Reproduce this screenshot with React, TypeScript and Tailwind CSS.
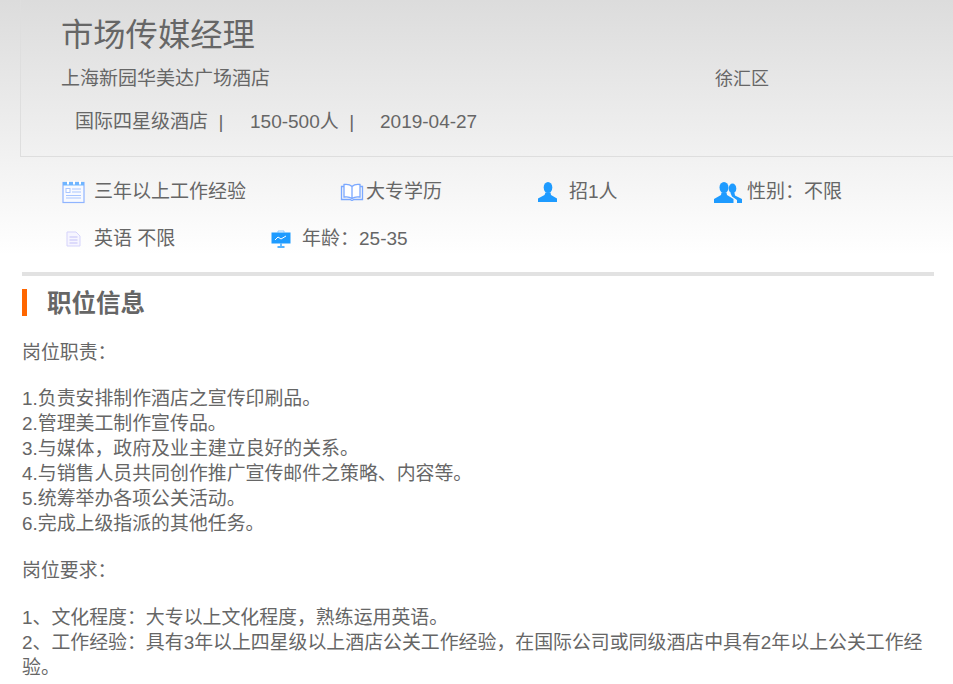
const font = "font-['Liberation_Sans','Noto_Sans_CJK_SC',sans-serif]"

const CalendarIcon = () => (
  <svg width="24" height="24" viewBox="0 0 24 24" fill="none">
    <rect x="1" y="2.500" width="21" height="20" fill="#f8faff" stroke="#8fb4ff" strokeWidth="1.200" />
    <rect x="1" y="2" width="21" height="3.500" fill="#6fb5ff" />
    <rect x="5" y="1" width="2" height="3.500" fill="#fff" />
    <rect x="11" y="1" width="2" height="3.500" fill="#fff" />
    <rect x="17" y="1" width="2" height="3.500" fill="#fff" />
    <rect x="4" y="8.500" width="4" height="4" fill="#fff" stroke="#a9c6ff" />
    <path d="M10 9h9M10 12h9M4 15.500h15M4 18h15" stroke="#a9c6ff" />
  </svg>
)

const BookIcon = () => (
  <svg width="24" height="18" viewBox="0 0 24 18" fill="none" stroke="#7aa8ff" strokeWidth="1.300">
    <path d="M12 3.500C10 1.500 7 1 4 1.500V14c3-.5 6 0 8 1.500 2-1.500 5-2 8-1.500V1.500C17 1 14 1.500 12 3.500zM12 3.500v12" fill="#fff" />
    <path d="M4 3.500H1.500V16.500H10L12 17.500 14 16.500H22.500V3.500H20" />
  </svg>
)

const UserIcon = () => (
  <svg width="20" height="20" viewBox="0 0 20 20" fill="#1e9bff">
    <ellipse cx="10" cy="5.500" rx="4.300" ry="5.500" />
    <path d="M7.500 10.500h5l.5 2.500 6 3.500V20H0v-3.500L6.500 13z" />
  </svg>
)

const UsersIcon = () => (
  <svg width="28" height="21" viewBox="0 0 28 21" fill="#1e9bff">
    <ellipse cx="18.500" cy="6.500" rx="3.800" ry="5" />
    <path d="M16.500 11h4l.5 2.500 7 3.500v4h-5v-3l-5-3.500z" />
    <ellipse cx="10" cy="5.500" rx="4.500" ry="5.500" />
    <path d="M7.500 10.500h5l.5 2.500 6.500 4v4H0v-4L7 13z" />
  </svg>
)

const DocIcon = () => (
  <svg width="15" height="16" viewBox="0 0 15 16" fill="#f6f5ff" stroke="#d5d3fb">
    <path d="M1 1h9l4 4v10H1z" />
    <path d="M3.500 6h8M3.500 9h8M3.500 12h8" stroke="#c3c0f7" />
  </svg>
)

const BoardIcon = () => (
  <svg width="20" height="18" viewBox="0 0 20 18" fill="none">
    <path d="M7 2.500V1h6v1.500" stroke="#8cc8ff" />
    <rect x="0.500" y="2.500" width="19" height="11" fill="#1e9bff" />
    <path d="M4 10l3-3 3 2 5-3" stroke="#fff" />
    <path d="M10 13.500V16M6.500 17h7" stroke="#1e9bff" strokeWidth="1.300" />
  </svg>
)

const Meta = ({ icon, text, iconBox, width }: { icon: React.ReactNode; text: string; iconBox: string; width: string }) => (
  <div className={`flex items-center ${width}`}>
    <span className={`flex items-center ${iconBox}`}>{icon}</span>
    <span>{text}</span>
  </div>
)

export default function App() {
  return (
    <div className={`${font} h-[684px] w-[953px] overflow-hidden bg-white text-[19px] text-[#666]`}>
      <div className="bg-gradient-to-b from-[#dcdcdc] to-white h-[255px]">
        <div className="ml-5 h-[157px] border-b border-l border-[#dedede] pl-[40px]">
          <h1 className="pt-[13px] text-[32.300px] leading-[44px] font-normal">市场传媒经理</h1>
          <div className="mt-[9px] flex leading-[26px]">
            <span className="w-[654px]">上海新园华美达广场酒店</span>
            <span className="text-[18px]">徐汇区</span>
          </div>
          <div className="mt-[17px] flex pl-[14px] leading-[26px] whitespace-pre">
            <span className="w-[175px]">国际四星级酒店  |</span>
            <span className="w-[130px]">150-500人  |</span>
            <span>2019-04-27</span>
          </div>
        </div>
        <div className="flex pt-[22px] pl-[62px] leading-[26px]">
          <Meta icon={<CalendarIcon />} text="三年以上工作经验" iconBox="w-[32px]" width="w-[278px]" />
          <Meta icon={<BookIcon />} text="大专学历" iconBox="w-[26px]" width="w-[198px]" />
          <Meta icon={<UserIcon />} text="招1人" iconBox="w-[31px]" width="w-[176px]" />
          <Meta icon={<UsersIcon />} text="性别：不限" iconBox="w-[33px]" width="w-[140px]" />
        </div>
        <div className="flex pt-[21px] pl-[66px] leading-[26px]">
          <Meta icon={<DocIcon />} text="英语 不限" iconBox="w-[28px]" width="w-[205px]" />
          <Meta icon={<BoardIcon />} text="年龄：25-35" iconBox="w-[31px]" width="w-[160px]" />
        </div>
      </div>
      <div className="ml-[22px] mr-[19px] mt-[17px] h-[4px] bg-[#e2e2e2]" />
      <div className="ml-[22px] mt-[13px] flex h-[27px] items-center border-l-[5px] border-[#ff6600] pt-[4px] pl-[20px] text-[24.500px] font-bold">
        职位信息
      </div>
      <div className="ml-[22px] mr-[19px] mt-[24px] text-[18.900px] leading-[25px]">
        <p>岗位职责：</p>
        <p className="mt-[21px]">1.负责安排制作酒店之宣传印刷品。</p>
        <p>2.管理美工制作宣传品。</p>
        <p>3.与媒体，政府及业主建立良好的关系。</p>
        <p>4.与销售人员共同创作推广宣传邮件之策略、内容等。</p>
        <p>5.统筹举办各项公关活动。</p>
        <p>6.完成上级指派的其他任务。</p>
        <p className="mt-[22px]">岗位要求：</p>
        <p className="mt-[22px]">1、文化程度：大专以上文化程度，熟练运用英语。</p>
        <p>2、工作经验：具有3年以上四星级以上酒店公关工作经验，在国际公司或同级酒店中具有2年以上公关工作经验。</p>
      </div>
    </div>
  )
}
